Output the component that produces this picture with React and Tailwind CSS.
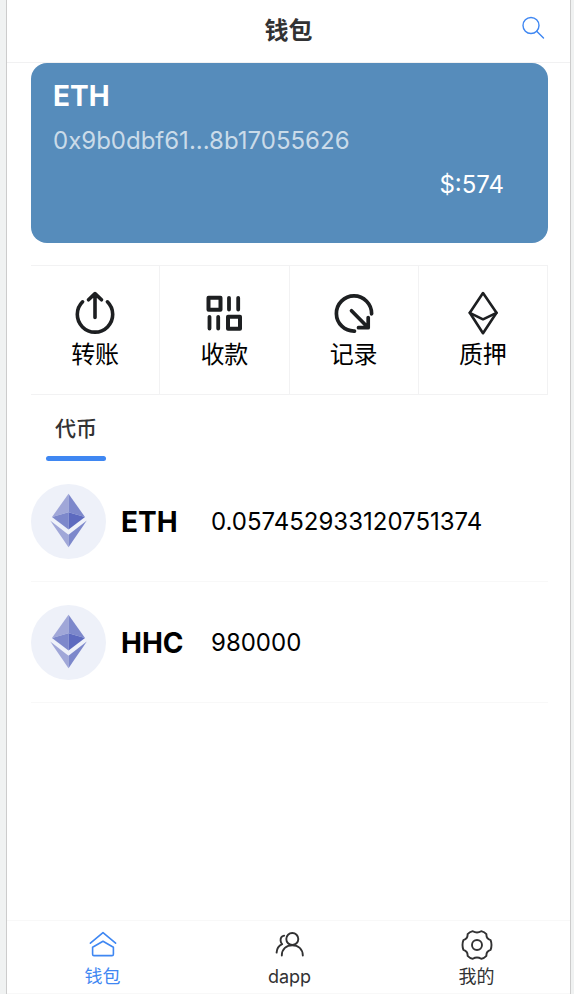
import React from "react";

const stroke = { fill: "none", stroke: "currentColor", strokeLinecap: "round", strokeLinejoin: "round" };

function SearchIcon() {
  return (
    <svg width="24" height="24" viewBox="0 0 24 24" strokeWidth="1.4" aria-hidden="true" {...stroke}>
      <circle cx="9" cy="9.5" r="8" />
      <path d="M14.7 15.2L21.5 22" />
    </svg>
  );
}

function TransferIcon() {
  return (
    <svg width="44" height="44" viewBox="0 0 44 44" strokeWidth="3.6" aria-hidden="true" {...stroke}>
      <path d="M9.6 10.8A17.7 17.7 0 1 0 34.4 10.8" />
      <path d="M22 26.5V3M15.5 8.8L22 2.6L28.5 8.8" />
    </svg>
  );
}

function ReceiveIcon() {
  return (
    <svg width="44" height="44" viewBox="0 0 44 44" strokeWidth="4" strokeLinecap="round" strokeLinejoin="round" fill="none" stroke="currentColor" aria-hidden="true">
      <rect x="6.5" y="6.8" width="12" height="12" />
      <rect x="26" y="25.8" width="12" height="12" />
      <path d="M27 6.8V18.6M36.2 6.8V18.6M7.5 25.8V37.6M16.2 25.8V37.6" strokeWidth="3.8" />
    </svg>
  );
}

function RecordIcon() {
  return (
    <svg width="44" height="44" viewBox="0 0 44 44" strokeWidth="3.7" aria-hidden="true" {...stroke}>
      <path d="M22.5 40.1A17.6 17.6 0 1 1 39.6 22.8" />
      <path d="M19.5 19.8L35.5 36M36.2 26.5V36.7H26.5" />
    </svg>
  );
}

function StakeIcon() {
  return (
    <svg width="44" height="44" viewBox="0 0 44 44" strokeWidth="2.6" aria-hidden="true" {...stroke}>
      <path d="M22 2L35.5 21.8L22 42.2L8.8 21.8Z" />
      <path d="M8.8 21.8L22 28.3L35.5 21.8" />
    </svg>
  );
}

function EthLogo() {
  return (
    <svg className="block size-[75px] shrink-0" viewBox="0 0 75 75" aria-hidden="true">
      <circle cx="37.5" cy="37.5" r="37.5" fill="#eef1f9" />
      <path d="M37.5 9.8L21 33L37.5 28.3Z" fill="#a0a7d8" />
      <path d="M37.5 9.8L54 33L37.5 28.3Z" fill="#7d88cb" />
      <path d="M21 33L37.5 28.3V45.5Z" fill="#7d88cb" />
      <path d="M54 33L37.5 28.3V45.5Z" fill="#5d6abf" />
      <path d="M19.2 36.5L37.5 50.7V63.3Z" fill="#a0a7d8" />
      <path d="M55.8 36.5L37.5 50.7V63.3Z" fill="#7d88cb" />
    </svg>
  );
}

function HomeIcon() {
  return (
    <svg width="32" height="32" viewBox="0 0 32 32" strokeWidth="1.6" aria-hidden="true" {...stroke}>
      <path d="M3.4 14.2L16 3.6L28.6 14.2" />
      <path d="M5.6 18.3L16 12.2L26.4 18.3V25.2Q26.4 26.6 25 26.6H7Q5.6 26.6 5.6 25.2Z" />
    </svg>
  );
}

function PeopleIcon() {
  return (
    <svg width="32" height="32" viewBox="0 0 32 32" strokeWidth="1.9" aria-hidden="true" {...stroke}>
      <circle cx="18.3" cy="10" r="6" />
      <path d="M7.8 26.5C7.8 20 12.5 16.2 18.3 16.2S28.8 20 28.8 26.5" />
      <path d="M10.2 6.6C7.6 7.2 6.4 9.2 6.6 11.6C6.7 13 7.2 14.2 8.2 15.1C4.8 16.6 2.8 19.6 2.6 23.6" />
    </svg>
  );
}

function SettingsIcon() {
  return (
    <svg width="32" height="32" viewBox="0 0 32 32" strokeWidth="1.9" aria-hidden="true" {...stroke}>
      <circle cx="16" cy="16" r="5" />
      <path d="M11.8 2.2C14.2 3.7 17.8 3.7 20.2 2.2Q23.4 3 25.4 5.2C25.2 7.9 26.8 10.3 29.6 11.2Q31.4 16 29.6 20.8C26.8 21.7 25.2 24.1 25.4 26.8Q23.4 29 20.2 29.8C17.8 28.3 14.2 28.3 11.8 29.8Q8.6 29 6.6 26.8C6.8 24.1 5.2 21.7 2.4 20.8Q.6 16 2.4 11.2C5.2 10.3 6.8 7.9 6.6 5.2Q8.6 3 11.8 2.2Z" />
    </svg>
  );
}

const actions = [
  { label: "转账", Icon: TransferIcon },
  { label: "收款", Icon: ReceiveIcon },
  { label: "记录", Icon: RecordIcon },
  { label: "质押", Icon: StakeIcon },
];

const tokens = [
  { symbol: "ETH", balance: "0.057452933120751374" },
  { symbol: "HHC", balance: "980000" },
];

const tabs = [
  { label: "钱包", Icon: HomeIcon, color: "text-[#3f87f2]" },
  { label: "dapp", Icon: PeopleIcon, color: "text-[#323233]" },
  { label: "我的", Icon: SettingsIcon, color: "text-[#323233]" },
];

export default function App() {
  return (
    <div className="min-h-screen bg-[#f0f2f2] pl-[6px] pr-[3px] font-['Inter','Noto_Sans_CJK_SC',sans-serif] text-black">
      <div className="flex min-h-screen flex-col border-x border-[#cccccc] bg-white">
        <header className="grid h-[63px] grid-cols-[1fr_auto_1fr] items-center border-b border-[#f1f1f2] px-6">
          <h1 className="col-start-2 text-2xl font-bold text-[#323233]">钱包</h1>
          <button type="button" aria-label="搜索" className="justify-self-end pb-1.5 text-[#3f87f2]">
            <SearchIcon />
          </button>
        </header>

        <main className="flex-1 pr-[22px] pl-6">
          <section className="h-[180px] rounded-2xl bg-[#568cbb] px-[22px] pt-4 text-white">
            <h2 className="text-[28px] leading-[34px] font-bold">ETH</h2>
            <p className="mt-3 text-2xl text-white/70">0x9b0dbf61...8b17055626</p>
            <p className="mt-3 pr-[22px] text-right text-2xl">$:574</p>
          </section>

          <section className="mt-[22px] grid grid-cols-4 border-t border-[#f2f2f3]">
            {actions.map(({ label, Icon }) => (
              <button
                key={label}
                type="button"
                className="flex h-[129px] flex-col items-center gap-1 border-r border-b border-[#f2f2f3] pt-[25px] text-2xl"
              >
                <span className="block size-11 text-[#1d1f21]">
                  <Icon />
                </span>
                <span>{label}</span>
              </button>
            ))}
          </section>

          <div role="tablist" className="flex px-[15px]">
            <button
              type="button"
              role="tab"
              aria-selected="true"
              className="flex h-[66px] w-[60px] flex-col justify-end text-[21px] font-medium text-[#323233]"
            >
              <span className="block w-full pb-3">代币</span>
              <span className="block h-[5px] w-full rounded-full bg-[#3f87f2]" />
            </button>
          </div>

          <ul>
            {tokens.map((token) => (
              <li key={token.symbol} className="flex h-[121px] items-center border-b border-[#f8f8f8]">
                <EthLogo />
                <span className="ml-[15px] w-[90px] pt-0.5 text-[28px] font-bold">{token.symbol}</span>
                <span className="pt-0.5 text-2xl">{token.balance}</span>
              </li>
            ))}
          </ul>
        </main>

        <nav className="grid h-[74px] grid-cols-3 border-y border-[#f8f8f8] pl-0.5">
          {tabs.map(({ label, Icon, color }) => (
            <a key={label} href="#" className={`flex flex-col items-center gap-0.5 pt-2 text-lg ${color}`}>
              <Icon />
              <span>{label}</span>
            </a>
          ))}
        </nav>
      </div>
    </div>
  );
}
